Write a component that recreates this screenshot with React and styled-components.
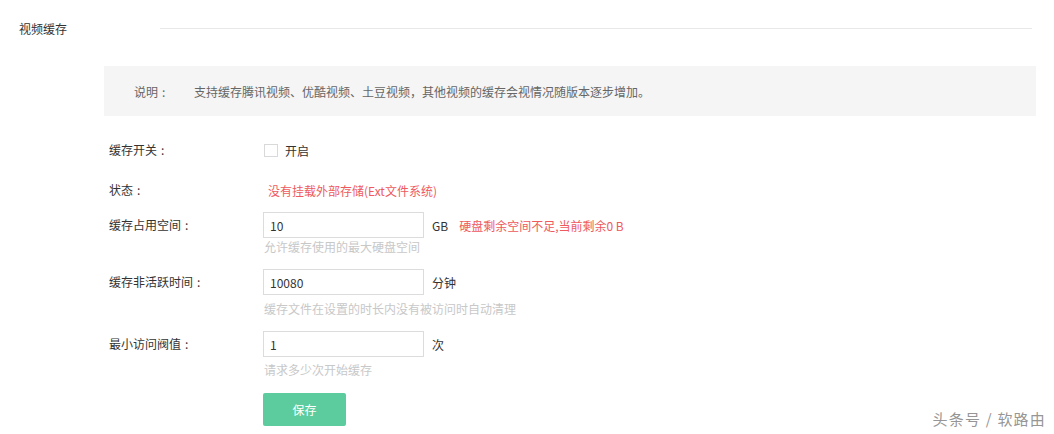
import React from "react";
import styled, { createGlobalStyle } from "styled-components";

const Global = createGlobalStyle`
  html, body { margin: 0; padding: 0; background: #fff; }
  body { font-family: "Noto Sans CJK SC", "Noto Sans", "Liberation Sans", sans-serif; font-size: 12px; color: #333; }
  * { box-sizing: border-box; }
`;

const Page = styled.div`
  width: 1054px;
  height: 434px;
  position: relative;
  overflow: hidden;
`;

const Header = styled.div`
  display: flex;
  align-items: center;
  height: 56px;
  padding: 0 22px 0 19px;
`;

const Title = styled.div`
  font-size: 12px;
  color: #333;
  width: 141px;
`;

const Rule = styled.div`
  flex: 1;
  height: 1px;
  background: #e8e8e8;
`;

const Content = styled.div`
  padding: 10px 18px 0 104px;
`;

const Notice = styled.div`
  display: flex;
  align-items: center;
  height: 50px;
  background: #f5f5f5;
  padding-left: 30px;
  color: #666;
  font-size: 12px;
`;

const NoticeLabel = styled.span`
  width: 60px;
`;

const Form = styled.div`
  padding-left: 5px;
`;

const Row = styled.div`
  display: grid;
  grid-template-columns: 154px auto;
  align-items: start;
  margin-top: ${(p) => p.$mt}px;
`;

const Label = styled.div`
  font-size: 12px;
  color: #333;
  line-height: ${(p) => p.$lh || 20}px;
`;

const Colon = styled.span`
  margin-left: 4px;
`;

const Control = styled.div`
  display: flex;
  flex-direction: column;
`;

const Line = styled.div`
  display: flex;
  align-items: center;
  min-height: ${(p) => p.$h || 20}px;
  gap: ${(p) => p.$gap || 8}px;
`;

const Check = styled.span`
  width: 14px;
  height: 13px;
  border: 1px solid #d9d9d9;
  background: #fff;
  margin-left: 1px;
  margin-right: -1px;
`;

const Text = styled.span`
  color: ${(p) => p.$color || "#333"};
  font-size: 12px;
  margin-left: ${(p) => p.$ml || 0}px;
`;

const Input = styled.input`
  width: 161px;
  height: 26px;
  border: 1px solid #dcdcdc;
  padding: 0 6px;
  font-family: inherit;
  font-size: 12px;
  color: #333;
  outline: none;
  margin: 0;
`;

const Hint = styled.div`
  color: #c8c8c8;
  font-size: 12px;
  line-height: 16px;
  margin-top: ${(p) => p.$mt}px;
  margin-left: 1px;
`;

const SaveButton = styled.button`
  width: 83px;
  height: 33px;
  border: none;
  border-radius: 2px;
  background: #5ccc9e;
  color: #fff;
  font-family: inherit;
  font-size: 12px;
  margin: 0;
`;

const Watermark = styled.div`
  position: absolute;
  right: 8px;
  bottom: 5px;
  font-size: 15px;
  color: #969696;
  letter-spacing: 1.2px;
`;

const Field = ({ children, lh }) => (
  <Label $lh={lh}>
    {children}
    <Colon>:</Colon>
  </Label>
);

export default function App() {
  return (
    <Page>
      <Global />
      <Header>
        <Title>视频缓存</Title>
        <Rule />
      </Header>
      <Content>
        <Notice>
          <NoticeLabel>
            说明<Colon>:</Colon>
          </NoticeLabel>
          <span>支持缓存腾讯视频、优酷视频、土豆视频，其他视频的缓存会视情况随版本逐步增加。</span>
        </Notice>
        <Form>
          <Row $mt={24}>
            <Field>缓存开关</Field>
            <Line $gap={8}>
              <Check />
              <Text>开启</Text>
            </Line>
          </Row>
          <Row $mt={20}>
            <Field>状态</Field>
            <Line>
              <Text $color="#ee5a5d" $ml={5}>没有挂载外部存储(Ext文件系统)</Text>
            </Line>
          </Row>
          <Row $mt={12}>
            <Field lh={26}>缓存占用空间</Field>
            <Control>
              <Line $h={26} $gap={8}>
                <Input defaultValue="10" />
                <Text>GB</Text>
                <Text $color="#ee5a5d" $ml={3}>硬盘剩余空间不足,当前剩余0 B</Text>
              </Line>
              <Hint $mt={1}>允许缓存使用的最大硬盘空间</Hint>
            </Control>
          </Row>
          <Row $mt={14}>
            <Field lh={26}>缓存非活跃时间</Field>
            <Control>
              <Line $h={26} $gap={8}>
                <Input defaultValue="10080" />
                <Text>分钟</Text>
              </Line>
              <Hint $mt={6}>缓存文件在设置的时长内没有被访问时自动清理</Hint>
            </Control>
          </Row>
          <Row $mt={14}>
            <Field lh={26}>最小访问阀值</Field>
            <Control>
              <Line $h={26} $gap={8}>
                <Input defaultValue="1" />
                <Text>次</Text>
              </Line>
              <Hint $mt={5}>请求多少次开始缓存</Hint>
            </Control>
          </Row>
          <Row $mt={15}>
            <span />
            <Control>
              <SaveButton>保存</SaveButton>
            </Control>
          </Row>
        </Form>
      </Content>
      <Watermark>头条号 / 软路由</Watermark>
    </Page>
  );
}
